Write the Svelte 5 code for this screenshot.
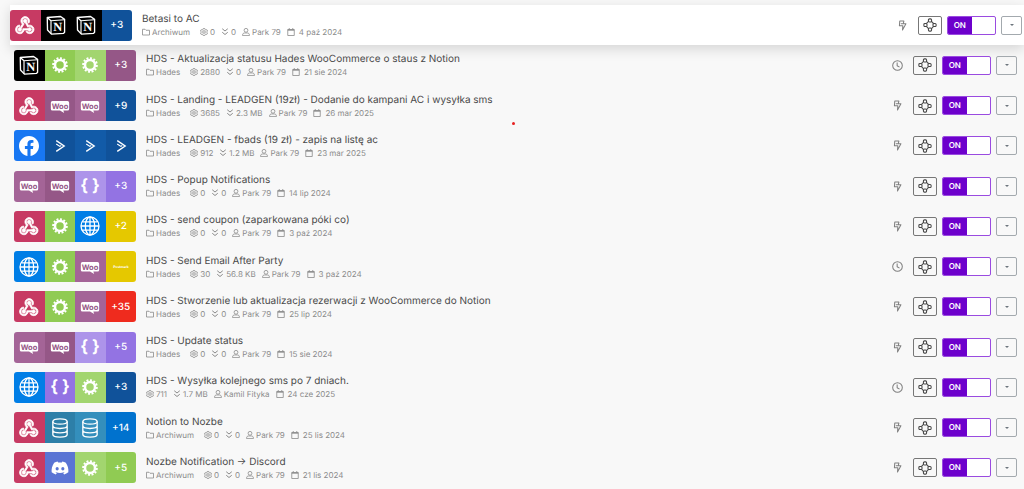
<script>
  let scenarios = [
    { title: 'Betasi to AC', apps: ['webhook', 'notion', 'notion'], more: '+3', moreColor: 'navy', folder: 'Archiwum', ops: '0', size: '0', user: 'Park 79', date: '4 paź 2024', trigger: 'bolt', on: true, active: true },
    { title: 'HDS - Aktualizacja statusu Hades WooCommerce o staus z Notion', apps: ['notion', 'gear', 'gear light'], more: '+3', moreColor: 'plum', folder: 'Hades', ops: '2880', size: '0', user: 'Park 79', date: '21 sie 2024', trigger: 'clock', on: true },
    { title: 'HDS - Landing - LEADGEN (19zł) - Dodanie do kampani AC i wysyłka sms', apps: ['webhook', 'woo dark', 'woo'], more: '+9', moreColor: 'navy', folder: 'Hades', ops: '3685', size: '2.3 MB', user: 'Park 79', date: '26 mar 2025', trigger: 'bolt', on: true },
    { title: 'HDS - LEADGEN - fbads (19 zł) - zapis na listę ac', apps: ['facebook', 'campaign', 'campaign light', 'campaign'], folder: 'Hades', ops: '912', size: '1.2 MB', user: 'Park 79', date: '23 mar 2025', trigger: 'bolt', on: true },
    { title: 'HDS - Popup Notifications', apps: ['woo', 'woo dark', 'json light'], more: '+3', moreColor: 'violet', folder: 'Hades', ops: '0', size: '0', user: 'Park 79', date: '14 lip 2024', trigger: 'bolt', on: true },
    { title: 'HDS - send coupon (zaparkowana póki co)', apps: ['webhook', 'gear', 'http'], more: '+2', moreColor: 'yellow', folder: 'Hades', ops: '0', size: '0', user: 'Park 79', date: '3 paź 2024', trigger: 'bolt', on: true },
    { title: 'HDS - Send Email After Party', apps: ['http', 'gear', 'woo', 'postmark'], folder: 'Hades', ops: '30', size: '56.8 KB', user: 'Park 79', date: '3 paź 2024', trigger: 'clock', on: true },
    { title: 'HDS - Stworzenie lub aktualizacja rezerwacji z WooCommerce do Notion', apps: ['webhook', 'gear', 'woo'], more: '+35', moreColor: 'red', folder: 'Hades', ops: '0', size: '0', user: 'Park 79', date: '25 lip 2024', trigger: 'bolt', on: true },
    { title: 'HDS - Update status', apps: ['woo', 'woo dark', 'json light'], more: '+5', moreColor: 'violet', folder: 'Hades', ops: '0', size: '0', user: 'Park 79', date: '15 sie 2024', trigger: 'bolt', on: true },
    { title: 'HDS - Wysyłka kolejnego sms po 7 dniach.', apps: ['http', 'json', 'gear light'], more: '+3', moreColor: 'navy', folder: '', ops: '711', size: '1.7 MB', user: 'Kamil Fityka', date: '24 cze 2025', trigger: 'clock', on: true },
    { title: 'Notion to Nozbe', apps: ['webhook', 'store', 'store light'], more: '+14', moreColor: 'blue', folder: 'Archiwum', ops: '0', size: '0', user: 'Park 79', date: '25 lis 2024', trigger: 'bolt', on: true },
    { title: 'Nozbe Notification → Discord', apps: ['webhook', 'discord', 'gear light'], more: '+5', moreColor: 'green', folder: 'Archiwum', ops: '0', size: '0', user: 'Park 79', date: '21 lis 2024', trigger: 'bolt', on: true }
  ];
</script>

{#snippet appIcon(name)}
  <svg class="app-icon" viewBox="0 0 24 24" aria-hidden="true">
    {#if name === 'webhook'}
      <path fill="currentColor" stroke="currentColor" stroke-width=".8" transform="translate(-1.8 -1.2) scale(1.13)" d="M10.46,19C9,21.07 6.15,21.59 4.09,20.15C2.04,18.71 1.56,15.84 3,13.75C3.87,12.5 5.21,11.83 6.58,11.77L6.63,13.2C5.72,13.27 4.84,13.74 4.27,14.56C3.27,16 3.58,17.94 4.95,18.91C6.33,19.87 8.26,19.5 9.26,18.07C9.57,17.62 9.75,17.13 9.82,16.63V15.62L15.4,15.58L15.47,15.47C16,14.55 17.15,14.23 18.05,14.75C18.95,15.27 19.26,16.43 18.73,17.35C18.2,18.26 17.04,18.58 16.14,18.06C15.73,17.83 15.44,17.46 15.31,17.04L11.24,17.06C11.13,17.73 10.87,18.38 10.46,19M17.74,11.86C20.27,12.17 22.07,14.44 21.76,16.93C21.45,19.43 19.15,21.2 16.62,20.89C15.13,20.71 13.9,19.86 13.19,18.68L14.43,17.96C14.92,18.73 15.75,19.28 16.75,19.41C18.5,19.62 20.05,18.43 20.26,16.76C20.47,15.09 19.23,13.56 17.5,13.35C16.96,13.29 16.44,13.36 15.97,13.53L15.12,13.97L12.54,9.2H12.32C11.26,9.16 10.41,8.29 10.44,7.25C10.47,6.21 11.4,5.4 12.45,5.44C13.5,5.5 14.33,6.35 14.3,7.39C14.28,7.83 14.11,8.23 13.84,8.54L15.74,12.05C16.36,11.85 17.04,11.78 17.74,11.86M8.25,9.14C7.25,6.79 8.31,4.1 10.62,3.12C12.94,2.14 15.62,3.25 16.62,5.6C17.21,6.97 17.09,8.47 16.42,9.67L15.18,8.95C15.6,8.14 15.67,7.15 15.27,6.22C14.59,4.62 12.78,3.85 11.23,4.5C9.67,5.16 8.97,7 9.65,8.6C9.93,9.26 10.4,9.77 10.97,10.11L11.36,10.32L8.29,15.31C8.32,15.36 8.36,15.42 8.39,15.5C8.88,16.41 8.54,17.56 7.62,18.05C6.71,18.54 5.56,18.18 5.06,17.24C4.57,16.31 4.91,15.16 5.83,14.67C6.22,14.46 6.65,14.41 7.06,14.5L9.37,10.73C8.9,10.3 8.5,9.76 8.25,9.14Z" />
    {:else if name === 'notion'}
      <path fill="#000" stroke="currentColor" stroke-width="1.6" stroke-linejoin="round" d="M1.5 3 17.5 1.8l4.8 3.4v15.600l-1.200 1.200-14.600 1-4.700-5Z" />
      <path fill="none" stroke="currentColor" stroke-width="1.4" stroke-linejoin="round" d="m1.800 3.300 4.200 3.600v15.800M6 6.900l16-1.200" />
      <text class="notion-n" x="14" y="19.400">N</text>
    {:else if name === 'gear'}
      <circle cx="12" cy="12" r="6" fill="none" stroke="currentColor" stroke-width="3" />
      <circle cx="12" cy="12" r="8.2" fill="none" stroke="currentColor" stroke-width="2.400" pathLength="48" stroke-dasharray="2.2 1.8" />
    {:else if name === 'woo'}
      <path fill="currentColor" d="M3 6h18a2 2 0 0 1 2 2v7.500a2 2 0 0 1-2 2h-5l1 3-5-3H3a2 2 0 0 1-2-2V8a2 2 0 0 1 2-2Z" />
      <text class="woo-text" x="12" y="15.300">Woo</text>
    {:else if name === 'facebook'}
      <path fill="currentColor" d="M24 12.07c0-6.63-5.37-12-12-12s-12 5.37-12 12c0 5.99 4.39 10.95 10.13 11.85v-8.38H7.08v-3.47h3.05V9.43c0-3 1.79-4.67 4.53-4.67 1.31 0 2.68.24 2.68.24v2.95h-1.51c-1.49 0-1.96.92-1.96 1.87v2.25h3.33l-.53 3.47h-2.8v8.38C19.61 23.03 24 18.06 24 12.07z" />
    {:else if name === 'campaign'}
      <path fill="none" stroke="currentColor" stroke-width="1.7" d="m7.500 5.500 9.500 6.500-9.500 6.500" />
      <path fill="none" stroke="currentColor" stroke-width="1.400" d="m7.500 9.500 4.300 3 1.700-1.100" />
    {:else if name === 'json'}
      <text class="json-text" x="12" y="18">&#123; &#125;</text>
    {:else if name === 'http'}
      <g fill="none" stroke="currentColor" stroke-width="1.6">
        <circle cx="12" cy="12" r="10.8" />
        <ellipse cx="12" cy="12" rx="5.6" ry="10.8" />
        <path d="M12 1.200v21.600M1.200 12h21.600M3 7h18M3 17h18" />
      </g>
    {:else if name === 'store'}
      <g fill="none" stroke="currentColor" stroke-width="1.6">
        <ellipse cx="12" cy="4.200" rx="8.6" ry="3.200" />
        <path d="M3.400 4.200v15.600c0 4.200 17.200 4.200 17.200 0V4.200M3.400 9.400c0 4.200 17.200 4.200 17.200 0M3.400 14.600c0 4.200 17.200 4.200 17.200 0" />
      </g>
    {:else if name === 'discord'}
      <path fill="currentColor" fill-rule="evenodd" d="M19 5.600a17 17 0 0 0-4.200-1.300l-.6 1.200a15 15 0 0 0-4.400 0l-.6-1.200A17 17 0 0 0 5 5.600C2.400 9.500 1.600 13.400 2 17.200a17 17 0 0 0 5.100 2.600l1.100-1.800-1.600-.8.4-.3a12 12 0 0 0 10 0l.4.3-1.600.8 1.100 1.800A17 17 0 0 0 22 17.200c.5-4.400-.7-8.200-3-11.600ZM8.600 14.900a1.900 2 0 1 1 0-4 1.900 2 0 0 1 0 4Zm6.800 0a1.900 2 0 1 1 0-4 1.900 2 0 0 1 0 4Z" />
    {:else if name === 'postmark'}
      <text class="postmark-text" x="12" y="13.500">Postmark</text>
    {/if}
  </svg>
{/snippet}

{#snippet icon(name)}
  <svg class="icon" viewBox="0 0 16 16" fill="none" stroke="currentColor" stroke-width="1.600" stroke-linejoin="round" aria-hidden="true">
    {#if name === 'folder'}
      <path d="M1 2.500h5l2 2h7v9.500H1Z" />
    {:else if name === 'ops'}
      <path d="M6.500 1h3l.5 2 1.700 1 2-.6 1.500 2.600-1.500 1.500v1.200l1.500 1.500-1.500 2.600-2-.6-1.700 1-.5 2h-3L6 13.200l-1.700-1-2 .6-1.500-2.600 1.500-1.500V7.500L.8 6l1.500-2.600 2 .6L6 3Z" />
      <circle cx="8" cy="8" r="2.600" />
    {:else if name === 'transfer'}
      <path stroke-width="2" d="m2.500 1.500 5.500 4.500 5.500-4.500M2.500 8.500 8 13l5.500-4.500" />
    {:else if name === 'user'}
      <circle cx="8" cy="4.600" r="3.800" />
      <path d="M1.200 15.200v-1.500c0-2.500 2-3.800 4.300-3.800h5c2.300 0 4.300 1.300 4.300 3.800v1.500Z" />
    {:else if name === 'calendar'}
      <path d="M1.500 3h13v12h-13ZM4.500 0v3M11.500 0v3" />
      <path stroke-width="2.600" d="M1.500 4h13" />
    {/if}
  </svg>
{/snippet}

<main class="list">
  {#each scenarios as item, i}
    <article class="row" class:row--active={item.active}>
      <div class="apps">
        {#each item.apps as app}
          <span class="tile tile--{app.split(' ').join(' tile--')}">{@render appIcon(app.split(' ')[0])}</span>
        {/each}
        {#if item.more}
          <span class="tile tile--{item.moreColor}">{item.more}</span>
        {/if}
      </div>

      <div class="info">
        <h2 class="title">{item.title}</h2>
        <div class="meta">
          {#if item.folder}
            <span class="meta__item meta__item--folder">{@render icon('folder')}{item.folder}</span>
          {/if}
          <span class="meta__item">{@render icon('ops')}{item.ops}</span>
          <span class="meta__item">{@render icon('transfer')}{item.size}</span>
          <span class="meta__item">{@render icon('user')}{item.user}</span>
          <span class="meta__item meta__item--date">{@render icon('calendar')}{item.date}</span>
        </div>
      </div>

      <div class="actions">
        <svg class="trigger" viewBox="0 0 16 16" fill="none" stroke="currentColor" stroke-width="1.500" stroke-linejoin="round" aria-hidden="true">
          {#if item.trigger === 'clock'}
            <circle cx="8" cy="8" r="7" />
            <path d="M7.500 3.500v4.800l3.500 2" />
          {:else}
            <path d="M4 1.500h6L9 5.500h4L8 14.500l.5-6H3.500ZM5.500 5.500H9" />
          {/if}
        </svg>
        <button class="btn btn--detail" aria-label="Open {item.title}">
          <svg class="flow" viewBox="0 0 16 16" fill="none" stroke="currentColor" stroke-width="1.200" aria-hidden="true">
            <circle cx="8" cy="8" r="4.200" />
            <g fill="#fafafa">
              <rect x="6.200" y="1" width="3.600" height="3.600" rx="1.200" />
              <rect x="6.200" y="11.400" width="3.600" height="3.600" rx="1.200" />
              <rect x="1" y="6.200" width="3.600" height="3.600" rx="1.200" />
              <rect x="11.400" y="6.200" width="3.600" height="3.600" rx="1.200" />
            </g>
          </svg>
        </button>
        <label class="toggle" class:toggle--off={!item.on} for="toggle-{i}">
          <input id="toggle-{i}" type="checkbox" bind:checked={item.on} aria-label="Active: {item.title}" />
          <span class="toggle__text">{item.on ? 'ON' : 'OFF'}</span>
        </label>
        <button class="btn btn--menu" aria-label="More options for {item.title}">
          <span class="caret"></span>
        </button>
      </div>
    </article>
  {/each}
  <span class="marker"></span>
</main>

<style>
  :global(body) {
    background: #f8f8f8;
  }

  .list {
    position: relative;
    display: grid;
    grid-auto-rows: 1fr;
    min-height: 100vh;
    padding: 5px 0 1px;
    box-sizing: border-box;
    overflow: hidden;
    font-family: Inter, sans-serif;
    text-rendering: geometricPrecision;
    color: #4a4a4a;
  }

  .row {
    display: flex;
    align-items: center;
    gap: 10px;
    padding: 0 7px 0 14px;
  }

  .row--active {
    margin-left: 10px;
    padding: 0 2px 0 0;
    background: #fff;
    box-shadow: 0 4px 12px rgba(0, 0, 0, 0.14);
  }

  /* App tiles */
  .apps {
    display: flex;
    flex: none;
    width: 122px;
    height: 31px;
    border-radius: 3px;
    overflow: hidden;
  }

  .tile {
    flex: 1 1 0;
    display: flex;
    align-items: center;
    justify-content: center;
    color: #fff;
    font-size: 10px;
    font-weight: 500;
  }

  .app-icon {
    width: 20px;
    height: 20px;
  }

  .tile--webhook { background: #c73a63; }
  .tile--notion { background: #000; }
  .tile--gear, .tile--green { background: #90cb53; }
  .tile--gear.tile--light { background: #a2d56f; }
  .tile--woo { background: #a46497; }
  .tile--woo.tile--dark, .tile--plum { background: #955787; }
  .tile--facebook { background: #1877f2; }
  .tile--campaign, .tile--navy { background: #10529a; }
  .tile--campaign.tile--light { background: #125ba8; }
  .tile--json, .tile--violet { background: #9373e3; }
  .tile--json.tile--light { background: #ad94ea; }
  .tile--http { background: #007ee6; }
  .tile--yellow, .tile--postmark { background: #e5c800; }
  .tile--red { background: #ef2b1e; }
  .tile--store { background: #2d7fa8; }
  .tile--store.tile--light { background: #348fbc; }
  .tile--blue { background: #0072ce; }
  .tile--discord { background: #5a74d4; }

  .app-icon text {
    text-anchor: middle;
    fill: currentColor;
  }

  .app-icon .notion-n {
    font: bold 15px "Liberation Serif", serif;
  }

  .app-icon .woo-text {
    font: bold 9px Inter, sans-serif;
    fill: #955787;
  }

  .app-icon .json-text {
    font: bold 20px Inter, sans-serif;
  }

  .app-icon .postmark-text {
    font: bold 4px Inter, sans-serif;
  }

  /* Text */
  .info {
    flex: 1;
    min-width: 0;
  }

  .title {
    margin: 0;
    font-size: 10px;
    font-weight: 400;
    line-height: 14px;
    white-space: nowrap;
  }

  .meta {
    display: flex;
    gap: 6px;
    color: #8a8a8a;
    font-size: 8px;
    line-height: 12px;
    white-space: nowrap;
  }

  .meta__item {
    display: flex;
    align-items: center;
    gap: 2px;
  }

  .meta__item--folder {
    margin-right: 4px;
  }

  .meta__item--date {
    gap: 4px;
  }

  .icon {
    width: 8px;
    height: 8px;
  }

  /* Controls */
  .actions {
    display: flex;
    align-items: center;
    gap: 5px;
  }

  .trigger {
    width: 11px;
    height: 11px;
    margin-right: 5px;
    color: #808080;
  }

  .btn {
    display: flex;
    align-items: center;
    justify-content: center;
    height: 19px;
    padding: 0;
    background: transparent;
    border: 1px solid #777;
    border-radius: 2px;
    cursor: pointer;
  }

  .btn--detail {
    width: 24px;
    color: #444;
  }

  .btn--menu {
    width: 21px;
    border-color: #a3a9ae;
  }

  .flow {
    width: 14px;
    height: 14px;
  }

  .caret {
    border: 2px solid transparent;
    border-top-color: #6c757d;
    border-bottom: 0;
  }

  .toggle {
    position: relative;
    display: flex;
    width: 49px;
    height: 19px;
    box-sizing: border-box;
    background: #fff;
    border: 1px solid #9a4be0;
    border-radius: 2px;
    overflow: hidden;
    cursor: pointer;
  }

  .toggle input {
    position: absolute;
    inset: 0;
    margin: 0;
    opacity: 0;
    cursor: pointer;
  }

  .toggle__text {
    width: 50%;
    background: #6d00cc;
    color: #fff;
    font-size: 8px;
    font-weight: 600;
    line-height: 17px;
    text-align: center;
  }

  .toggle--off {
    justify-content: flex-end;
    border-color: #999;
  }

  .toggle--off .toggle__text {
    background: #999;
  }

  .marker {
    position: absolute;
    top: 122px;
    left: 50%;
    width: 3px;
    height: 3px;
    border-radius: 50%;
    background: #e62020;
  }
</style>
